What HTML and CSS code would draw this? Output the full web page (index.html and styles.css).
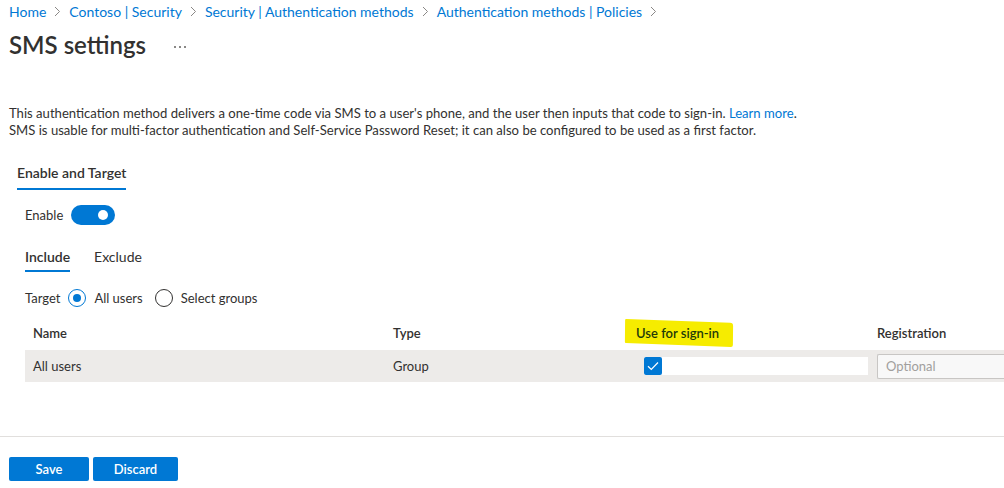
FILE: index.html
```html
<!DOCTYPE html>
<html lang="en">
<head>
<meta charset="utf-8">
<title>SMS settings</title>
<link rel="stylesheet" href="styles.css">
</head>
<body>
<div class="page">
  <nav class="breadcrumb">
    <a class="crumb">Home</a>
    <svg class="chev" width="7" height="11" viewBox="0 0 7 11"><path d="M1 1l4.5 4.5L1 10" fill="none" stroke="#8a8886" stroke-width="1"/></svg>
    <a class="crumb">Contoso | Security</a>
    <svg class="chev" width="7" height="11" viewBox="0 0 7 11"><path d="M1 1l4.5 4.5L1 10" fill="none" stroke="#8a8886" stroke-width="1"/></svg>
    <a class="crumb">Security | Authentication methods</a>
    <svg class="chev" width="7" height="11" viewBox="0 0 7 11"><path d="M1 1l4.5 4.5L1 10" fill="none" stroke="#8a8886" stroke-width="1"/></svg>
    <a class="crumb">Authentication methods | Policies</a>
    <svg class="chev" width="7" height="11" viewBox="0 0 7 11"><path d="M1 1l4.5 4.5L1 10" fill="none" stroke="#8a8886" stroke-width="1"/></svg>
  </nav>

  <header class="title-row">
    <h1 class="title">SMS settings</h1>
    <span class="more"><i></i><i></i><i></i></span>
  </header>

  <p class="desc">This authentication method delivers a one-time code via SMS to a user's phone, and the user then inputs that code to sign-in. <a class="link">Learn more</a>.<br>SMS is usable for multi-factor authentication and Self-Service Password Reset; it can also be configured to be used as a first factor.</p>

  <div class="main-tabs">
    <div class="tab active">Enable and Target</div>
  </div>

  <div class="content">
    <div class="enable-row">
      <span>Enable</span>
      <span class="toggle"><span class="knob"></span></span>
    </div>

    <div class="sub-tabs">
      <div class="tab active">Include</div>
      <div class="tab">Exclude</div>
    </div>

    <div class="target-row">
      <span class="target-label">Target</span>
      <span class="radio checked"></span>
      <span class="radio-label">All users</span>
      <span class="radio"></span>
      <span class="radio-label">Select groups</span>
    </div>

    <div class="table">
      <div class="row head">
        <div class="cell">Name</div>
        <div class="cell">Type</div>
        <div class="cell"><span class="marker">Use for sign-in</span></div>
        <div class="cell">Registration</div>
      </div>
      <div class="row body">
        <div class="cell">All users</div>
        <div class="cell">Group</div>
        <div class="cell check-cell">
          <span class="check-field">
            <span class="checkbox"><svg width="12" height="10" viewBox="0 0 12 10"><path d="M1 5.2l3.3 3.2L11 1.5" fill="none" stroke="#fff" stroke-width="1.2"/></svg></span>
          </span>
        </div>
        <div class="cell select-cell"><span class="dropdown">Optional</span></div>
      </div>
    </div>
  </div>

  <div class="divider"></div>

  <div class="actions">
    <button class="btn save">Save</button>
    <button class="btn discard">Discard</button>
  </div>
</div>
</body>
</html>
```

FILE: styles.css
```css
* { box-sizing: border-box; }
html, body {
  margin: 0;
  padding: 0;
  background: #fff;
}
body {
  font-family: "Segoe UI", Lato, "Liberation Sans", sans-serif;
  color: #323130;
  font-size: 13px;
  overflow: hidden;
  width: 1004px;
  height: 488px;
}
.page {
  display: flex;
  flex-direction: column;
}

/* breadcrumb */
.breadcrumb {
  display: flex;
  align-items: center;
  height: 22px;
  padding-left: 9px;
  font-size: 14px;
  gap: 8px;
}
.crumb { color: #0078d4; text-decoration: none; white-space: nowrap; }
.chev { flex: none; }

/* title */
.title-row {
  display: flex;
  align-items: center;
  margin-top: 7px;
  height: 32px;
  padding-left: 9px;
}
.title {
  margin: 0;
  font-size: 24px;
  font-weight: 600;
  line-height: 32px;
  color: #323130;
}
.more {
  display: flex;
  gap: 3px;
  margin-left: 28px;
  margin-top: 3px;
}
.more i {
  width: 2px;
  height: 2px;
  background: #8a8886;
  display: block;
}

/* description */
.desc {
  margin: 44px 0 0 0;
  padding-left: 9px;
  line-height: 17px;
  font-size: 13.1px;
}
.link { color: #0078d4; }

/* tabs */
.main-tabs {
  display: flex;
  margin-top: 24px;
  padding-left: 17px;
}
.tab {
  line-height: 20px;
  font-size: 14px;
  white-space: nowrap;
}
.main-tabs .tab {
  padding-bottom: 5px;
  border-bottom: 2px solid #0078d4;
  font-weight: 600;
}

.content {
  padding-left: 25px;
  display: flex;
  flex-direction: column;
}

.enable-row {
  display: flex;
  align-items: center;
  gap: 8px;
  height: 20px;
  margin-top: 15px;
}
.toggle {
  width: 44px;
  height: 20px;
  border-radius: 10px;
  background: #0078d4;
  display: flex;
  align-items: center;
  justify-content: flex-end;
  padding-right: 7px;
}
.knob {
  width: 10px;
  height: 10px;
  border-radius: 50%;
  background: #fff;
}

.sub-tabs {
  display: flex;
  gap: 24px;
  margin-top: 22px;
}
.sub-tabs .tab {
  padding-bottom: 3px;
  border-bottom: 2px solid transparent;
}
.sub-tabs .tab.active {
  border-bottom-color: #0078d4;
  font-weight: 600;
}

.target-row {
  display: flex;
  align-items: center;
  height: 20px;
  margin-top: 16px;
}
.radio {
  width: 18px;
  height: 18px;
  border-radius: 50%;
  border: 1px solid #323130;
  margin: 0 8px;
  display: flex;
  align-items: center;
  justify-content: center;
}
.radio.checked { border-color: #0078d4; }
.radio.checked::after {
  content: "";
  width: 8px;
  height: 8px;
  border-radius: 50%;
  background: #0078d4;
}
.radio-label + .radio { margin-left: 12px; }

/* table */
.table {
  margin-top: 8px;
}
.row {
  display: grid;
  grid-template-columns: 360px 243px 241px 1fr;
  align-items: center;
}
.row.head { height: 34px; font-weight: 600; }
.row.body { height: 32px; background: #edebe9; }
.cell { padding-left: 8px; white-space: nowrap; min-width: 0; }
.marker {
  position: relative;
  z-index: 0;
  color: #1e3a0a;
}
.marker::before {
  content: "";
  position: absolute;
  z-index: -1;
  left: -11px;
  right: -14px;
  top: -4px;
  bottom: -4px;
  background: #f6ec00;
  transform: skewY(1.5deg) rotate(0.6deg);
  border-radius: 1px 3px 2px 1px;
}
.check-cell { padding-left: 16px; }
.check-field {
  display: flex;
  width: 224px;
  height: 18px;
  background: #fff;
}
.checkbox {
  width: 18px;
  height: 18px;
  border-radius: 2px;
  background: #0078d4;
  display: flex;
  align-items: center;
  justify-content: center;
}
.select-cell { overflow: hidden; }
.dropdown {
  display: flex;
  align-items: center;
  width: 200px;
  height: 25px;
  border: 1px solid #c8c6c4;
  border-right: none;
  border-radius: 2px 0 0 2px;
  background: #f8f8f8;
  color: #a19f9d;
  padding-left: 8px;
}

.divider {
  margin-top: 54px;
  height: 1px;
  background: #e1dfdd;
}

.actions {
  display: flex;
  gap: 4px;
  margin-top: 20px;
  padding-left: 9px;
}
.btn {
  height: 24px;
  border: none;
  border-radius: 2px;
  background: #0078d4;
  color: #fff;
  font-family: inherit;
  font-size: 13px;
  font-weight: 600;
  padding: 0;
}
.btn.save { width: 80px; }
.btn.discard { width: 85px; }
```
